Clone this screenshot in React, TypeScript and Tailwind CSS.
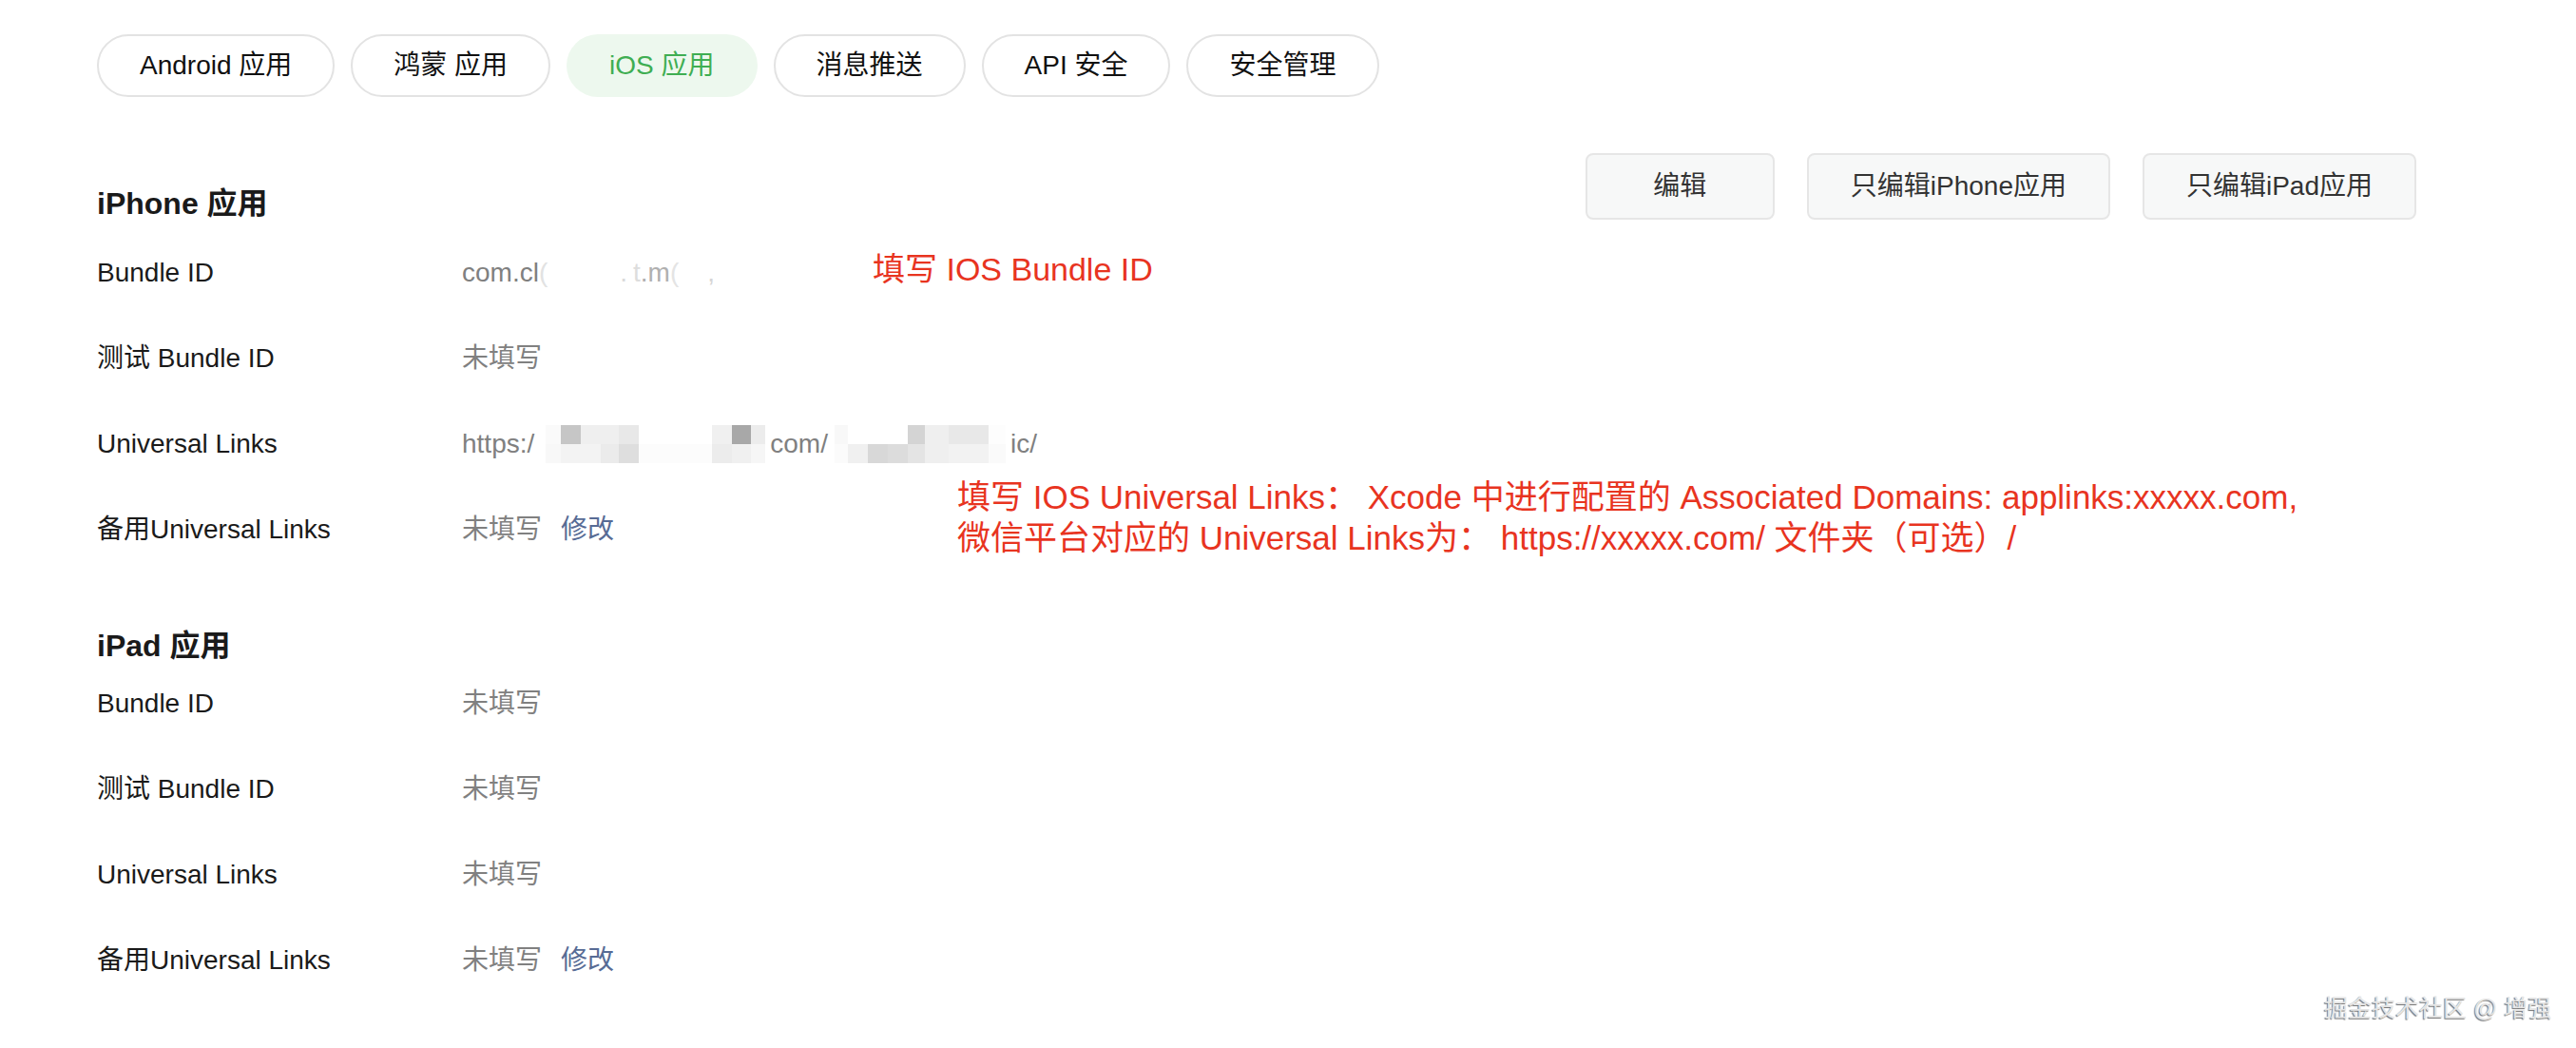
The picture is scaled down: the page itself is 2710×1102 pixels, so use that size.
import React from "react";

const FONT = "font-['Liberation_Sans','Noto_Sans_CJK_SC',sans-serif]";

const tabs = ["Android 应用", "鸿蒙 应用", "iOS 应用", "消息推送", "API 安全", "安全管理"];

const mosaic1: { widths: string[]; row1: string[]; row2: string[] } = {
  widths: ["w-[16px]", "w-[21px]", "w-[21px]", "w-[19px]", "w-[21px]", "w-[77px]", "w-[21px]", "w-[20px]", "w-[15px]"],
  row1: ["bg-[#fafafa]", "bg-[#c6c6c6]", "bg-[#efefef]", "bg-[#efefef]", "bg-[#e8e8e8]", "bg-[#ffffff]", "bg-[#f0f0f0]", "bg-[#a8a8a8]", "bg-[#ececec]"],
  row2: ["bg-[#f8f8f8]", "bg-[#f3f3f3]", "bg-[#f3f3f3]", "bg-[#ebebeb]", "bg-[#dedede]", "bg-[#fcfcfc]", "bg-[#ececec]", "bg-[#f0f0f0]", "bg-[#f6f6f6]"],
};

const mosaic2 = {
  widths: ["w-[14px]", "w-[21px]", "w-[21px]", "w-[21px]", "w-[18px]", "w-[25px]", "w-[42px]", "w-[18px]"],
  row1: ["bg-[#f8f8f8]", "bg-[#ffffff]", "bg-[#ffffff]", "bg-[#ffffff]", "bg-[#d4d4d4]", "bg-[#efefef]", "bg-[#e8e8e8]", "bg-[#fdfdfd]"],
  row2: ["bg-[#fbfbfb]", "bg-[#f0f0f0]", "bg-[#d8d8d8]", "bg-[#dcdcdc]", "bg-[#e4e4e4]", "bg-[#efefef]", "bg-[#f2f2f2]", "bg-[#fafafa]"],
};

function Mosaic({ m }: { m: { widths: string[]; row1: string[]; row2: string[] } }) {
  return (
    <div className="flex h-[40px] flex-col">
      <div className="flex h-[20px]">
        {m.widths.map((w, i) => (
          <div key={i} className={`${w} h-full ${m.row1[i]}`} />
        ))}
      </div>
      <div className="flex h-[20px]">
        {m.widths.map((w, i) => (
          <div key={i} className={`${w} h-full ${m.row2[i]}`} />
        ))}
      </div>
    </div>
  );
}

function Empty({ edit }: { edit?: boolean }) {
  return (
    <div className="flex">
      <span className="text-[#808080]">未填写</span>
      {edit && <span className="ml-[20px] text-[#576b95]">修改</span>}
    </div>
  );
}

function Row({ label, children }: { label: string; children: React.ReactNode }) {
  return (
    <div className="flex text-[28px] leading-[40px]">
      <div className="w-[384px] shrink-0 text-[#1a1a1a]">{label}</div>
      <div className="flex items-start whitespace-nowrap">{children}</div>
    </div>
  );
}

export default function App() {
  return (
    <div className={`relative h-[1102px] w-full overflow-hidden bg-white pl-[102px] pr-[168px] pt-[36px] ${FONT}`}>
      {/* tabs */}
      <div className="flex gap-[17px]">
        {tabs.map((t) => {
          const active = t === "iOS 应用";
          return (
            <div
              key={t}
              className={`flex h-[66px] items-center rounded-full border-2 px-[43px] text-[28px] whitespace-nowrap ${
                active ? "border-transparent bg-[#edf8ee] text-[#3fae52]" : "border-[#e3e3e3] bg-white text-[#111111]"
              }`}
            >
              {t}
            </div>
          );
        })}
      </div>

      {/* iPhone section */}
      <div className="mt-[59px] flex items-start justify-between">
        <h2 className="mt-[31px] text-[32px] font-bold leading-[44px] text-[#1a1a1a]">iPhone 应用</h2>
        <div className="flex gap-[34px]">
          {["编辑", "只编辑iPhone应用", "只编辑iPad应用"].map((b, i) => (
            <div
              key={b}
              className={`flex h-[70px] items-center justify-center rounded-[8px] border-2 border-[#e6e6e6] bg-[#f7f8f8] px-[44px] text-[28px] whitespace-nowrap text-[#333333] ${
                i === 0 ? "w-[199px]" : ""
              }`}
            >
              {b}
            </div>
          ))}
        </div>
      </div>

      <div className="mt-[31px] flex flex-col gap-[50px]">
        <Row label="Bundle ID">
          <span className="text-[#808080]">com.cl</span>
          <span className="text-[#e2e2e2]">(</span>
          <span className="inline-block w-[76px]" />
          <span className="text-[#dadada]">.</span>
          <span className="inline-block w-[6px]" />
          <span className="text-[#dddddd]">t</span>
          <span className="text-[#b0b0b0]">.m</span>
          <span className="text-[#e4e4e4]">(</span>
          <span className="inline-block w-[30px]" />
          <span className="text-[#d6d6d6]">,</span>
        </Row>
        <Row label="测试 Bundle ID">
          <Empty />
        </Row>
        <Row label="Universal Links">
          <span className="text-[#808080]">https:/</span>
          <div className="ml-[12px] mr-[5px]">
            <Mosaic m={mosaic1} />
          </div>
          <span className="text-[#808080]">com/</span>
          <div className="ml-[7px] mr-[5px]">
            <Mosaic m={mosaic2} />
          </div>
          <span className="text-[#808080]">ic/</span>
        </Row>
        <Row label="备用Universal Links">
          <Empty edit />
        </Row>
      </div>

      {/* iPad section */}
      <h2 className="mt-[80px] text-[32px] font-bold leading-[44px] text-[#1a1a1a]">iPad 应用</h2>
      <div className="mt-[19px] flex flex-col gap-[50px]">
        <Row label="Bundle ID">
          <Empty />
        </Row>
        <Row label="测试 Bundle ID">
          <Empty />
        </Row>
        <Row label="Universal Links">
          <Empty />
        </Row>
        <Row label="备用Universal Links">
          <Empty edit />
        </Row>
      </div>

      {/* red annotations */}
      <div className="absolute left-[918px] top-[263px] whitespace-nowrap text-[34px] leading-[40px] text-[#e8341f]">
        填写 IOS Bundle ID
      </div>
      <div className="absolute left-[1007px] top-[501px] whitespace-nowrap text-[35px] leading-[43px] text-[#e8341f]">
        <div>填写 IOS Universal Links： Xcode 中进行配置的 Associated Domains: applinks:xxxxx.com,</div>
        <div>微信平台对应的 Universal Links为： https://xxxxx.com/ 文件夹（可选）/</div>
      </div>

      {/* watermark */}
      <div className="absolute left-[2445px] top-[1042px] whitespace-nowrap text-[25px] leading-[36px] text-[#e6e6e6] [text-shadow:-1px_1px_1px_#707070]">
        掘金技术社区 @ 增强
      </div>
    </div>
  );
}
